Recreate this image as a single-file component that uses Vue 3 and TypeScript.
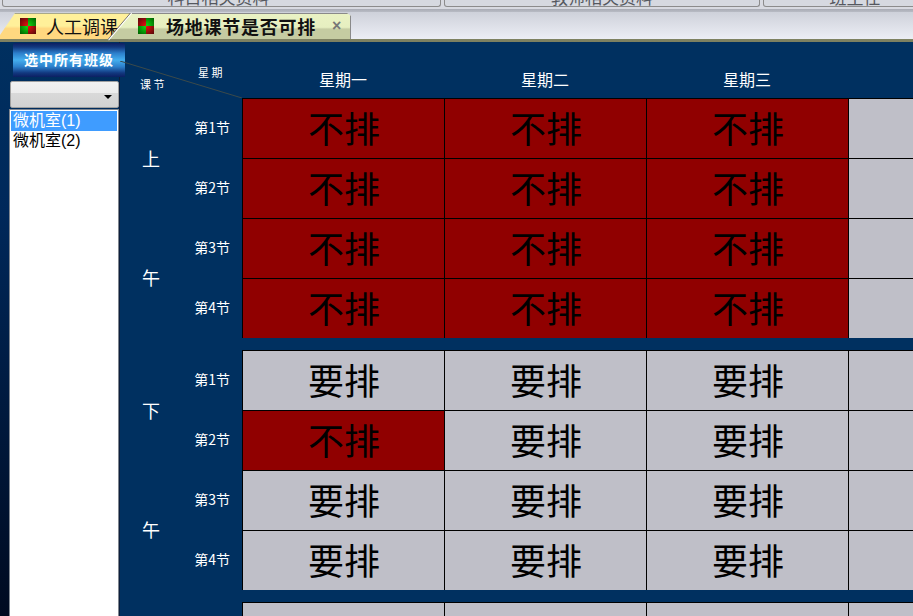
<script setup lang="ts">
const days = ['星期一', '星期二', '星期三']
interface Row { label: string; cells: string[] }
const am: Row[] = [
  { label: '第1节', cells: ['不排', '不排', '不排', ''] },
  { label: '第2节', cells: ['不排', '不排', '不排', ''] },
  { label: '第3节', cells: ['不排', '不排', '不排', ''] },
  { label: '第4节', cells: ['不排', '不排', '不排', ''] },
]
const pm: Row[] = [
  { label: '第1节', cells: ['要排', '要排', '要排', ''] },
  { label: '第2节', cells: ['不排', '要排', '要排', ''] },
  { label: '第3节', cells: ['要排', '要排', '要排', ''] },
  { label: '第4节', cells: ['要排', '要排', '要排', ''] },
]
const rooms = ['微机室(1)', '微机室(2)']
</script>

<template>
  <div class="app">
    <div class="topbar">
      <div class="topbtn b1"><span>科目相关资料</span></div>
      <div class="topbtn b2"><span>教师相关资料</span></div>
      <div class="topbtn b3"><span>班主任</span></div>
    </div>
    <div class="tabbar">
      <div class="tab inactive">
        <svg class="tabicon" width="16" height="16" viewBox="0 0 16 16">
          <defs>
            <radialGradient id="rg" gradientUnits="userSpaceOnUse" cx="8" cy="8" r="11"><stop offset="0" stop-color="#f01010"/><stop offset="1" stop-color="#580808"/></radialGradient>
            <radialGradient id="gg" gradientUnits="userSpaceOnUse" cx="8" cy="8" r="11"><stop offset="0" stop-color="#10e010"/><stop offset="1" stop-color="#006000"/></radialGradient>
          </defs>
          <rect width="8" height="8" fill="url(#rg)"/><rect x="8" width="8" height="8" fill="url(#gg)"/><rect y="8" width="8" height="8" fill="url(#gg)"/><rect x="8" y="8" width="8" height="8" fill="url(#rg)"/>
        </svg>
        <span>人工调课</span>
      </div>
      <div class="tab active">
        <svg class="tabicon" width="16" height="16" viewBox="0 0 16 16">
          <rect width="8" height="8" fill="url(#rg)"/><rect x="8" width="8" height="8" fill="url(#gg)"/><rect y="8" width="8" height="8" fill="url(#gg)"/><rect x="8" y="8" width="8" height="8" fill="url(#rg)"/>
        </svg>
        <b>场地课节是否可排</b>
        <i class="close">×</i>
      </div>
      <svg class="slant" width="26" height="28" viewBox="0 0 26 28">
        <line x1="23.5" y1="0" x2="0.5" y2="27" stroke="#fff" stroke-width="1.2"/>
        <line x1="22.5" y1="0" x2="-0.5" y2="27" stroke="#55585a" stroke-width="0.8"/>
      </svg>
    </div>
    <div class="body">
      <aside class="side">
        <button class="selall">选中所有班级</button>
        <div class="combo"><i class="arrow"></i></div>
        <ul class="list">
          <li v-for="(r, i) in rooms" :key="r" :class="{ sel: i === 0 }">{{ r }}</li>
        </ul>
      </aside>
      <main class="main">
        <div class="head">
          <svg class="diag" width="122" height="37" viewBox="0 0 122 37"><line x1="0" y1="0" x2="122" y2="37" stroke="#3b4a4a" stroke-width="1"/></svg>
          <div class="corner">
            <span class="xq">星 期</span>
            <span class="kj">课 节</span>
          </div>
          <div v-for="d in days" :key="d" class="day">{{ d }}</div>
          <div class="day"></div>
        </div>
        <section class="block">
          <div class="period"><span>上</span><span>午</span></div>
          <div class="rows">
            <div v-for="r in am" :key="r.label" class="row">
              <div class="lbl">{{ r.label }}</div>
              <div v-for="(c, i) in r.cells" :key="i" class="cell" :class="c === '不排' ? 'no' : 'yes'">{{ c }}</div>
            </div>
          </div>
        </section>
        <section class="block second">
          <div class="period"><span>下</span><span>午</span></div>
          <div class="rows">
            <div v-for="r in pm" :key="r.label" class="row">
              <div class="lbl">{{ r.label }}</div>
              <div v-for="(c, i) in r.cells" :key="i" class="cell" :class="c === '不排' ? 'no' : 'yes'">{{ c }}</div>
            </div>
          </div>
        </section>
        <div class="stub">
          <div class="stubcell"></div>
          <div class="stubcell"></div>
          <div class="stubcell"></div>
          <div class="stubcell"></div>
        </div>
      </main>
    </div>
  </div>
</template>

<style scoped>
.app { width: 913px; height: 616px; overflow: hidden; display: flex; flex-direction: column; background: #003060; font-family: "Noto Sans CJK SC", "Liberation Sans", sans-serif; }
.topbar { height: 12px; flex: none; display: flex; gap: 3px; background: linear-gradient(#d8dae1 0, #d8dae1 75%, #a9acb5 76%, #b8bbc4 100%); box-sizing: border-box; overflow: hidden; }
.topbtn { height: 6px; border: 1px solid #8c8c8c; border-top: 0; border-radius: 0 0 3px 3px; background: #d6d9e0; box-sizing: content-box; text-align: center; overflow: hidden; position: relative; }
.topbtn span { display: block; font-size: 17px; line-height: 18px; margin-top: -12px; color: #55585f; }
.b1 { width: 437px; margin-left: 2px; padding-right: 0; }
.b1 span { margin-right: 6px; }
.b2 { width: 314px; }
.b3 { flex: 1; margin-right: -6px; }
.b3 span { margin-left: 28px; }
.tabbar { height: 30px; flex: none; display: flex; align-items: flex-start; background: linear-gradient(#ced1da, #eceef5); border-bottom: 3px solid; border-image: linear-gradient(#b4bc9a, #7d8060) 1; box-sizing: border-box; padding-top: 1px; position: relative; }
.slant { position: absolute; left: 108px; top: 1px; }
.tab { height: 26px; display: flex; align-items: center; font-size: 18px; color: #111; box-sizing: border-box; }
.tab.inactive { width: 132px; padding-left: 20px; background: linear-gradient(#fff09a 0, #fff09a 50%, #ffd880 60%, #ffd880 100%); box-shadow: inset 0 1px 0 #a8a88a; clip-path: polygon(15px 0, 132px 0, 108px 100%, 0 100%, 0 22px); }
.tab.inactive .tabicon { margin-right: 10px; }
.tab.active { width: 242px; margin-left: -23px; padding-left: 29px; background: linear-gradient(#eaf2c4 0, #e6efc0 55%, #c5cca2 62%, #c5cca2 100%); box-shadow: inset 0 1px 0 #8a8a8a, inset -1px 0 0 #8a8a8a; clip-path: polygon(23px 0, 238px 0, 242px 3px, 242px 100%, 0 100%); }
.tab.active .tabicon { margin-right: 12px; }
.tab b { font-weight: 700; font-size: 18px; letter-spacing: 0.75px; font-family: "Noto Sans CJK SC", sans-serif; }
.close { font-style: normal; font-weight: 700; color: #777; font-size: 16px; font-family: "Liberation Sans", sans-serif; margin-left: 16px; }
.tabicon { flex: none; }
.body { flex: 1; display: flex; min-height: 0; }
.side { width: 120px; flex: none; box-sizing: border-box; background: linear-gradient(#003060 0, #00285a 30%, #000a20 100%); border-right: 1px solid #0c1f3c; display: flex; flex-direction: column; align-items: flex-start; }
.selall { width: 112px; height: 34px; margin: 1px 0 0 13px; border: 0; border-radius: 2px 2px 0 0; padding: 0 0 2px; background: linear-gradient(#0c1f62 0, #12387f 12%, #2c7fcb 30%, #44aeee 50%, #2c7fcb 70%, #12387f 88%, #0c1f62 100%); color: #fff; font: 700 14px "Noto Sans CJK SC", sans-serif; letter-spacing: 1px; flex: none; }
.combo { width: 109px; height: 27px; margin: 4px 0 0 10px; border: 1px solid #a0a0a0; border-radius: 2px; box-sizing: border-box; background: linear-gradient(#f2f2f2 0, #ececec 45%, #d9d9d9 46%, #d2d2d2 100%); position: relative; flex: none; }
.arrow { position: absolute; right: 6px; top: 13px; width: 0; height: 0; border: 4px solid transparent; border-top: 4px solid #000; border-bottom: 0; }
.list { list-style: none; margin: 1px 0 0 9px; padding: 1px 1px; width: 110px; flex: 1; background: #fff; border: 1px solid #7f8690; border-bottom: 0; box-sizing: border-box; }
.list li { height: 20px; line-height: 20px; font-size: 16px; color: #000; padding-left: 2px; font-family: "Liberation Sans", "Noto Sans CJK SC", sans-serif; }
.list li.sel { background: #3f9cff; color: #fff; }
.main { flex: 1; min-width: 0; position: relative; }
.head { height: 56px; display: flex; position: relative; }
.diag { position: absolute; left: 0; top: 19px; }
.corner { width: 122px; position: relative; flex: none; color: #fff; font-size: 11px; }
.xq { position: absolute; left: 78px; top: 22px; }
.kj { position: absolute; left: 20px; top: 34px; }
.day { width: 202px; flex: none; color: #fff; text-align: center; font-size: 16px; line-height: 24px; padding-top: 25px; box-sizing: border-box; }
.block { display: flex; height: 240px; }
.block.second { margin-top: 12px; }
.period { width: 60px; flex: none; display: flex; flex-direction: column; justify-content: space-around; align-items: center; color: #fff; font-size: 18px; padding: 0 0 2px 2px; box-sizing: border-box; }
.rows { flex: 1; min-width: 0; }
.row { height: 60px; display: flex; }
.lbl { width: 62px; flex: none; color: #fff; font-size: 14px; text-align: right; padding-right: 12px; box-sizing: border-box; line-height: 59px; }
.cell { width: 202px; height: 60px; flex: none; box-sizing: border-box; border-top: 1px solid #000; border-left: 1px solid #000; padding-left: 1px; text-align: center; line-height: 57px; font-size: 36px; color: #000; }
.no { background: #900000; }
.yes { background: #bfbfc8; }
.stub { display: flex; margin: 12px 0 0 122px; }
.stubcell { width: 202px; height: 60px; flex: none; box-sizing: border-box; background: #bfbfc8; border-top: 1px solid #000; border-left: 1px solid #000; }
</style>
